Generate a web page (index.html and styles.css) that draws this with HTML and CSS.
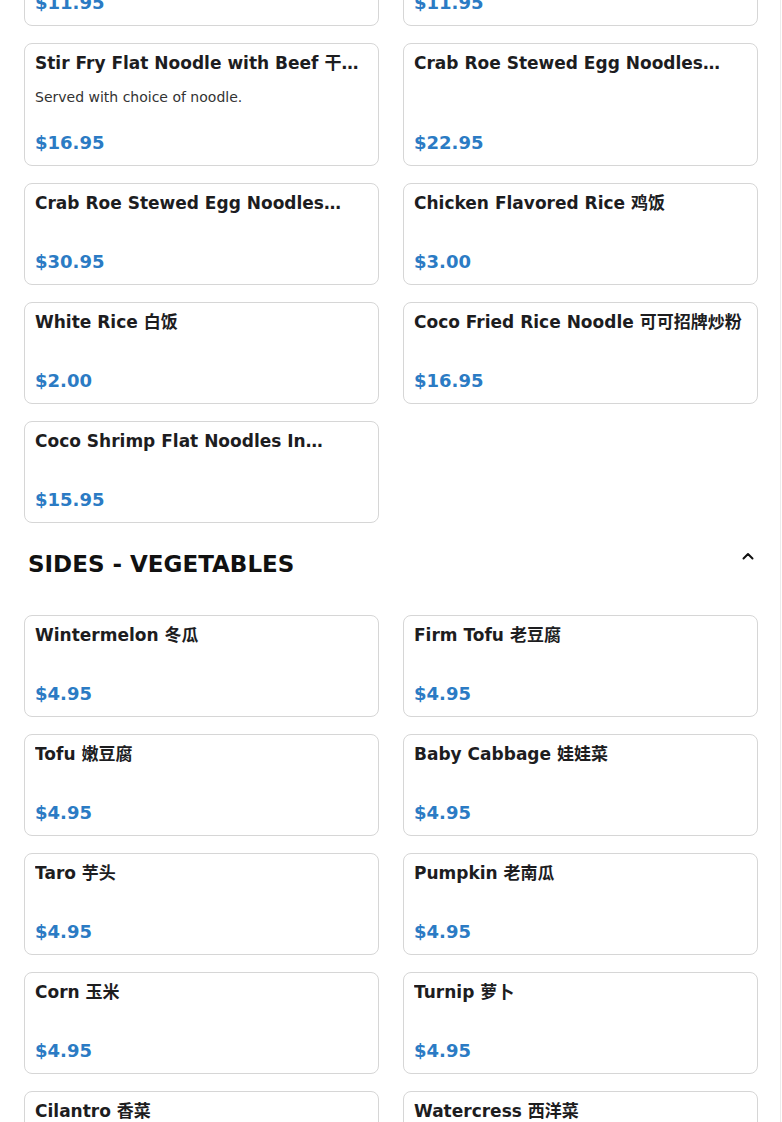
FILE: index.html
```html
<!DOCTYPE html>
<html lang="zh">
  <head>
    <meta charset="UTF-8" />
    <meta name="viewport" content="width=device-width, initial-scale=1.0" />
    <title>Menu - Coco Noodle House</title>
    <link rel="stylesheet" href="styles.css">
  </head>
  <body>
    <div class="page">
      <main class="menu">
        <!-- Noodles & Rice (scrolled part way down) -->
        <section class="menu-section scrolled">
          <div class="item-grid">
            <div class="item-card">
              <div class="item-name">Beef Chow Fun 牛肉炒河粉</div>
              <div class="item-price">$11.95</div>
            </div>
            <div class="item-card">
              <div class="item-name">Shrimp Fried Rice 虾仁炒饭</div>
              <div class="item-price">$11.95</div>
            </div>
            <div class="item-card">
              <div class="item-name">Stir Fry Flat Noodle with Beef 干炒牛河</div>
              <div class="item-desc">Served with choice of noodle.</div>
              <div class="item-price">$16.95</div>
            </div>
            <div class="item-card">
              <div class="item-name">Crab Roe Stewed Egg Noodles (Small) 蟹黄焖伊面</div>
              <div class="item-price">$22.95</div>
            </div>
            <div class="item-card">
              <div class="item-name">Crab Roe Stewed Egg Noodles (Large) 蟹黄焖伊面</div>
              <div class="item-price">$30.95</div>
            </div>
            <div class="item-card">
              <div class="item-name">Chicken Flavored Rice 鸡饭</div>
              <div class="item-price">$3.00</div>
            </div>
            <div class="item-card">
              <div class="item-name">White Rice 白饭</div>
              <div class="item-price">$2.00</div>
            </div>
            <div class="item-card">
              <div class="item-name">Coco Fried Rice Noodle 可可招牌炒粉</div>
              <div class="item-price">$16.95</div>
            </div>
            <div class="item-card">
              <div class="item-name">Coco Shrimp Flat Noodles In Scrambled Egg Sauce 滑蛋虾仁河粉</div>
              <div class="item-price">$15.95</div>
            </div>
          </div>
        </section>

        <section class="menu-section">
          <div class="section-head">
            <h2>SIDES - VEGETABLES</h2>
            <button class="collapse-btn" aria-label="Collapse">
              <svg width="20" height="20" viewBox="0 0 20 20" fill="none" stroke="#111" stroke-width="2" stroke-linecap="round" stroke-linejoin="round"><path d="M5.5 12.5L10 8l4.5 4.5"/></svg>
            </button>
          </div>
          <div class="item-grid">
            <div class="item-card">
              <div class="item-name">Wintermelon 冬瓜</div>
              <div class="item-price">$4.95</div>
            </div>
            <div class="item-card">
              <div class="item-name">Firm Tofu 老豆腐</div>
              <div class="item-price">$4.95</div>
            </div>
            <div class="item-card">
              <div class="item-name">Tofu 嫩豆腐</div>
              <div class="item-price">$4.95</div>
            </div>
            <div class="item-card">
              <div class="item-name">Baby Cabbage 娃娃菜</div>
              <div class="item-price">$4.95</div>
            </div>
            <div class="item-card">
              <div class="item-name">Taro 芋头</div>
              <div class="item-price">$4.95</div>
            </div>
            <div class="item-card">
              <div class="item-name">Pumpkin 老南瓜</div>
              <div class="item-price">$4.95</div>
            </div>
            <div class="item-card">
              <div class="item-name">Corn 玉米</div>
              <div class="item-price">$4.95</div>
            </div>
            <div class="item-card">
              <div class="item-name">Turnip 萝卜</div>
              <div class="item-price">$4.95</div>
            </div>
            <div class="item-card">
              <div class="item-name">Cilantro 香菜</div>
              <div class="item-price">$4.95</div>
            </div>
            <div class="item-card">
              <div class="item-name">Watercress 西洋菜</div>
              <div class="item-price">$4.95</div>
            </div>
          </div>
        </section>
      </main>
    </div>
  </body>
</html>
```

FILE: styles.css
```css
/* Menu page */
body {
  font-family: "DejaVu Sans", "Noto Sans CJK SC", sans-serif;
  margin: 0;
  padding: 0;
  background-color: #fff;
  color: #1d1d1f;
}

.page {
  width: 781px;
  box-sizing: border-box;
  border-right: 1px solid #ececec;
  min-height: 100vh;
}

.menu {
  padding: 0 22px 40px 24px;
}

/* the page is shown scrolled part way into the list */
.menu-section.scrolled {
  margin-top: -76px;
}

.item-grid {
  display: grid;
  grid-template-columns: 1fr 1fr;
  column-gap: 24px;
  row-gap: 17px;
}

.item-card {
  display: flex;
  flex-direction: column;
  min-height: 102px;
  box-sizing: border-box;
  min-width: 0;
  padding: 9px 10px 12px;
  border: 1px solid #d6d6d6;
  border-radius: 8px;
  background: white;
}

/* one line, cut at a whole word */
.item-name {
  display: -webkit-box;
  -webkit-box-orient: vertical;
  -webkit-line-clamp: 1;
  overflow: hidden;
  font-size: 17px;
  font-weight: bold;
  line-height: 20px;
  color: #1d1d1f;
}

.item-desc {
  margin-top: 16px;
  font-size: 14px;
  line-height: 17px;
  color: #333;
}

.item-price {
  margin-top: auto;
  padding-top: 26px;
  font-size: 18px;
  font-weight: bold;
  line-height: 21px;
  color: #2b7bc4;
}

.section-head {
  display: flex;
  justify-content: space-between;
  align-items: flex-start;
  padding: 23px 0 37px 4px;
}

.section-head h2 {
  margin: 4px 0 0;
  font-size: 23px;
  line-height: 28px;
  color: #111;
}

.collapse-btn {
  width: 20px;
  height: 20px;
  padding: 0;
  border: none;
  background: none;
  cursor: pointer;
}

.collapse-btn svg {
  display: block;
}
```
